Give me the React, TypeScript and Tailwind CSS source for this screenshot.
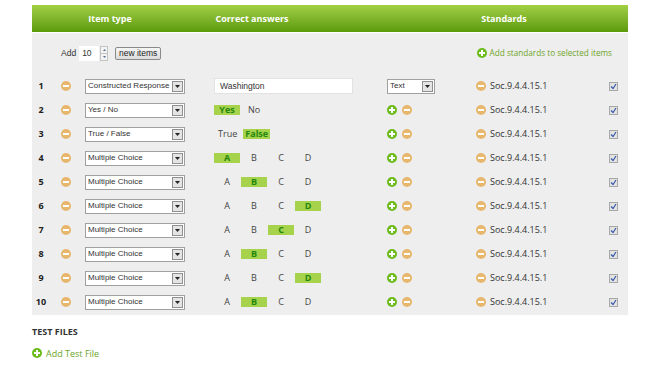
import React from "react";

type Row = {
  n: number;
  type: string;
  kind: "text" | "yesno" | "tf" | "mc";
  answer?: string;
};

const rows: Row[] = [
  { n: 1, type: "Constructed Response", kind: "text" },
  { n: 2, type: "Yes / No", kind: "yesno", answer: "Yes" },
  { n: 3, type: "True / False", kind: "tf", answer: "False" },
  { n: 4, type: "Multiple Choice", kind: "mc", answer: "A" },
  { n: 5, type: "Multiple Choice", kind: "mc", answer: "B" },
  { n: 6, type: "Multiple Choice", kind: "mc", answer: "D" },
  { n: 7, type: "Multiple Choice", kind: "mc", answer: "C" },
  { n: 8, type: "Multiple Choice", kind: "mc", answer: "B" },
  { n: 9, type: "Multiple Choice", kind: "mc", answer: "D" },
  { n: 10, type: "Multiple Choice", kind: "mc", answer: "B" },
];

function MinusIcon() {
  return (
    <svg width="10" height="10" viewBox="0 0 10 10" className="shrink-0">
      <circle cx="5" cy="5" r="5" fill="#e8b76e" />
      <rect x="2" y="4" width="6" height="2" fill="#fff" />
    </svg>
  );
}

function PlusIcon() {
  return (
    <svg width="10" height="10" viewBox="0 0 10 10" className="shrink-0">
      <circle cx="5" cy="5" r="5" fill="#6cbd1c" />
      <rect x="2" y="4" width="6" height="2" fill="#fff" />
      <rect x="4" y="2" width="2" height="6" fill="#fff" />
    </svg>
  );
}

function Select({ value, width }: { value: string; width: string }) {
  return (
    <div
      className={`${width} h-[15px] flex items-stretch border border-[#a0a0a0] bg-white font-['Liberation_Sans',sans-serif] text-[8px] text-[#333]`}
    >
      <div className="flex-1 flex items-center pl-[2px] overflow-hidden whitespace-nowrap">
        {value}
      </div>
      <div className="w-[11px] m-[1px] flex items-center justify-center bg-[#e4e4e4] border border-[#909090]">
        <svg width="5" height="3" viewBox="0 0 5 3">
          <path d="M0 0 H5 L2.5 3 Z" fill="#222" />
        </svg>
      </div>
    </div>
  );
}

function Badge({ label, on }: { label: string; on: boolean }) {
  return (
    <span
      className={`w-[26px] h-[10px] flex items-center justify-center ${
        on ? "bg-[#a6d34b] text-[#24870f] font-bold" : "text-[#444]"
      }`}
    >
      {label}
    </span>
  );
}

function Answer({ row }: { row: Row }) {
  if (row.kind === "text") {
    return (
      <div className="w-[139px] h-[16px] bg-white border border-[#e2e2e2] flex items-center pl-[5px] font-['Liberation_Sans',sans-serif] text-[8.5px] text-[#333]">
        Washington
      </div>
    );
  }
  if (row.kind === "yesno") {
    return (
      <div className="flex items-center gap-[8px]">
        <Badge label="Yes" on={row.answer === "Yes"} />
        <span className="text-[#444]">No</span>
      </div>
    );
  }
  if (row.kind === "tf") {
    return (
      <div className="flex items-center gap-[6px] pl-[4px]">
        <span className="text-[#444]">True</span>
        <span className="w-[27px] h-[10px] flex items-center justify-center bg-[#a6d34b] text-[#24870f] font-bold">
          False
        </span>
      </div>
    );
  }
  return (
    <div className="flex items-center gap-[1px]">
      {["A", "B", "C", "D"].map((l) => (
        <Badge key={l} label={l} on={row.answer === l} />
      ))}
    </div>
  );
}

function Checkbox() {
  return (
    <div className="w-[9px] h-[9px] border border-[#a8a8a8] bg-[#e3e3e3] flex items-center justify-center">
      <svg width="7" height="7" viewBox="0 0 7 7">
        <path d="M1 3.5 L3 5.5 L6 1" stroke="#3b5ca8" strokeWidth="1.2" fill="none" />
      </svg>
    </div>
  );
}

export default function App() {
  return (
    <div className="w-[658px] h-[366px] bg-white font-['Open_Sans',sans-serif] text-[9px] text-[#333]">
      <div className="pt-[5px] pl-[32px] w-[628px]">
        {/* header bar */}
        <div className="h-[27px] flex items-center bg-gradient-to-b from-[#a3d044] to-[#5b9a08] text-white font-bold text-[9px]">
          <div className="w-[156px] text-center">Item type</div>
          <div className="w-[128px] text-center">Correct answers</div>
          <div className="ml-[64px] w-[248px] text-center">Standards</div>
        </div>

        <div className="mt-[1px] bg-[#eeeeee] pb-[1px]">
          {/* add row */}
          <div className="h-[41px] flex items-center">
            <span className="ml-[29px] text-[#333] font-['Liberation_Sans',sans-serif] text-[8.5px]">Add</span>
            <div className="ml-[3px] w-[20px] h-[15px] bg-white flex items-center pl-[3px] font-['Liberation_Sans',sans-serif] text-[8.5px]">
              10
            </div>
            <div className="ml-[1px] w-[8px] h-[15px] flex flex-col border border-[#c4c4c4] bg-[#f3f3f3]">
              <div className="flex-1 flex items-center justify-center border-b border-[#c4c4c4]">
                <svg width="3" height="2" viewBox="0 0 3 2">
                  <path d="M0 2 H3 L1.5 0 Z" fill="#5a6f9a" />
                </svg>
              </div>
              <div className="flex-1 flex items-center justify-center">
                <svg width="3" height="2" viewBox="0 0 3 2">
                  <path d="M0 0 H3 L1.5 2 Z" fill="#5a6f9a" />
                </svg>
              </div>
            </div>
            <button className="ml-[7px] w-[46px] h-[13px] border border-[#8a8a8a] rounded-[2px] bg-gradient-to-b from-[#f6f6f6] to-[#dcdcdc] font-['Liberation_Sans',sans-serif] text-[8.5px] text-[#222] leading-none">
              new items
            </button>
            <div className="ml-auto mr-[16px] flex items-center gap-[3px] text-[#6ea52c]">
              <PlusIcon />
              <span className="text-[8.2px]">Add standards to selected items</span>
            </div>
          </div>

          {/* item rows */}
          {rows.map((row) => (
            <div key={row.n} className="h-[24px] flex items-center">
              <div className="w-[18px] text-center font-bold text-[#222]">{row.n}</div>
              <div className="ml-[11px]">
                <MinusIcon />
              </div>
              <div className="ml-[14px]">
                <Select value={row.type} width="w-[100px]" />
              </div>
              <div className="ml-[29px] w-[173px] flex items-center">
                <Answer row={row} />
              </div>
              <div className="w-[89px] flex items-center gap-[5px]">
                {row.kind === "text" ? (
                  <Select value="Text" width="w-[48px]" />
                ) : (
                  <>
                    <PlusIcon />
                    <MinusIcon />
                  </>
                )}
              </div>
              <div className="w-[133px] flex items-center gap-[4px]">
                <MinusIcon />
                <span className="text-[#333]">Soc.9.4.4.15.1</span>
              </div>
              <Checkbox />
            </div>
          ))}
        </div>

        <div className="mt-[10px] font-bold text-[#333] text-[9px]">TEST FILES</div>
        <div className="mt-[8px] flex items-center gap-[4px] text-[#6ea52c]">
          <PlusIcon />
          <span>Add Test File</span>
        </div>
      </div>
    </div>
  );
}
